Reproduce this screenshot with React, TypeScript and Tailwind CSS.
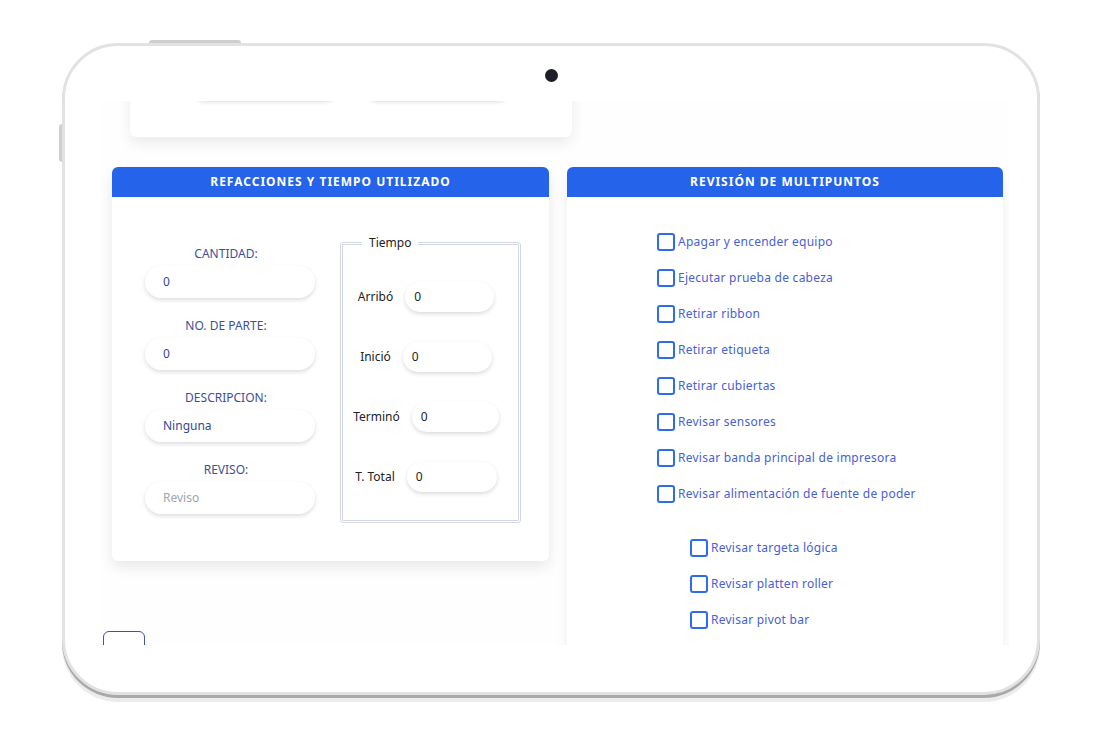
import React from "react";

const font = { fontFamily: '"Noto Sans", "Open Sans", sans-serif' };

const checks = [
  "Apagar y encender equipo",
  "Ejecutar prueba de cabeza",
  "Retirar ribbon",
  "Retirar etiqueta",
  "Retirar cubiertas",
  "Revisar sensores",
  "Revisar banda principal de impresora",
  "Revisar alimentación de fuente de poder",
];

const subChecks = ["Revisar targeta lógica", "Revisar platten roller", "Revisar pivot bar"];

const fields = [
  { label: "CANTIDAD:", value: "0" },
  { label: "NO. DE PARTE:", value: "0" },
  { label: "DESCRIPCION:", value: "Ninguna" },
  { label: "REVISO:", value: "" },
];

const tiempo = [
  { label: "Arribó", w: "w-[89px]" },
  { label: "Inició", w: "w-[89px]" },
  { label: "Terminó", w: "w-[87px]" },
  { label: "T. Total", w: "w-[90px]" },
];

function CheckRow({ text }: { text: string }) {
  return (
    <label className="flex h-[18px] items-center gap-[3px]">
      <span className="h-[18px] w-[18px] shrink-0 rounded-[3px] border-2 border-[#2f6bef] bg-white" />
      <span className="text-[12px] leading-4 tracking-[0.25px] text-[#4760d8]">{text}</span>
    </label>
  );
}

function CardHeader({ title }: { title: string }) {
  return (
    <div className="flex h-[30px] items-center justify-center rounded-t-md bg-[#2563eb]">
      <span className="text-[12px] font-bold tracking-[1px] text-white">{title}</span>
    </div>
  );
}

export default function App() {
  return (
    <div className="h-[750px] w-[1100px] overflow-hidden bg-white pl-[62px] pt-[43px]" style={font}>
      {/* tablet frame */}
      <div className="relative flex h-[652px] w-[978px] flex-col rounded-[56px] border-[3px] border-[#e2e2e2] bg-white shadow-[0_3px_0_#a9a9a9,0_7px_0_#ececec]">
        <span className="absolute left-[84px] top-[-6px] h-[3px] w-[92px] rounded-t bg-[#cfcfcf]" />
        <span className="absolute left-[-6px] top-[78px] h-[38px] w-[3px] rounded-l bg-[#cfcfcf]" />

        <div className="flex h-[55px] shrink-0 justify-center pt-[23px]">
          <span className="h-[13px] w-[13px] rounded-full bg-[#1e1e28]" />
        </div>

        {/* screen */}
        <div className="ml-[35px] h-[544px] w-[909px] overflow-hidden bg-[#fefefe]">
          {/* top card, scrolled partly out of view */}
          <div className="ml-[30px] mt-[-60px] flex w-[442px] gap-[22px] rounded-md bg-white pb-[37px] pl-[60px] pt-[27px] shadow-[0_6px_14px_rgba(0,0,0,0.08)]">
            <div className="h-[32px] w-[150px] rounded-full bg-white shadow-[0_2px_4px_rgba(0,0,0,0.14)]" />
            <div className="h-[32px] w-[150px] rounded-full bg-white shadow-[0_2px_4px_rgba(0,0,0,0.14)]" />
          </div>

          <div className="mt-[30px] flex gap-[18px] pl-[12px]">
            {/* left column */}
            <div className="flex w-[437px] flex-col">
              <section className="rounded-md bg-white shadow-[0_6px_14px_rgba(0,0,0,0.09)]">
                <CardHeader title="REFACCIONES Y TIEMPO UTILIZADO" />
                <div className="flex items-start gap-[25px] pb-[38px] pl-[33px] pt-[38px]">
                  <div className="mt-[11px] flex w-[170px] flex-col gap-[20px]">
                    {fields.map((f) => (
                      <div key={f.label} className="flex flex-col gap-[4px]">
                        <p className="pr-[8px] text-center text-[12px] leading-4 text-[#3e4f98]">{f.label}</p>
                        <div className="flex h-[32px] items-center rounded-full bg-white pl-[18px] text-[12px] shadow-[0_2px_4px_rgba(0,0,0,0.14)]">
                          {f.value ? (
                            <span className="text-[#34479a]">{f.value}</span>
                          ) : (
                            <span className="text-[#a0a4ad]">Reviso</span>
                          )}
                        </div>
                      </div>
                    ))}
                  </div>

                  <fieldset className="w-[181px] rounded-[3px] border-[3px] border-double border-[#d3d7e6] pb-[28px] pr-[9px] pt-[31px]">
                    <legend className="ml-[19px] px-[7px] text-[12px] leading-4 text-[#222]">Tiempo</legend>
                    <div className="flex flex-col gap-[30px]">
                      {tiempo.map((t) => (
                        <div key={t.label} className="flex items-center justify-center gap-[12px]">
                          <span className="text-[12px] text-[#222]">{t.label}</span>
                          <div className={`flex h-[30px] items-center rounded-full bg-white pl-[9px] text-[12px] text-[#222] shadow-[0_2px_4px_rgba(0,0,0,0.14)] ${t.w}`}>
                            0
                          </div>
                        </div>
                      ))}
                    </div>
                  </fieldset>
                </div>
              </section>

              <div className="ml-[-9px] mt-[70px] h-[40px] w-[42px] rounded-md border-[1.5px] border-[#3f51a8] bg-white" />
            </div>

            {/* right column */}
            <section className="w-[436px] rounded-t-md bg-white shadow-[0_6px_14px_rgba(0,0,0,0.06)]">
              <CardHeader title="REVISIÓN DE MULTIPUNTOS" />
              <div className="flex flex-col gap-[18px] pl-[90px] pt-[36px]">
                {checks.map((c) => (
                  <CheckRow key={c} text={c} />
                ))}
              </div>
              <div className="mt-[36px] flex flex-col gap-[18px] pb-[60px] pl-[123px]">
                {subChecks.map((c) => (
                  <CheckRow key={c} text={c} />
                ))}
              </div>
            </section>
          </div>
        </div>
      </div>
    </div>
  );
}
